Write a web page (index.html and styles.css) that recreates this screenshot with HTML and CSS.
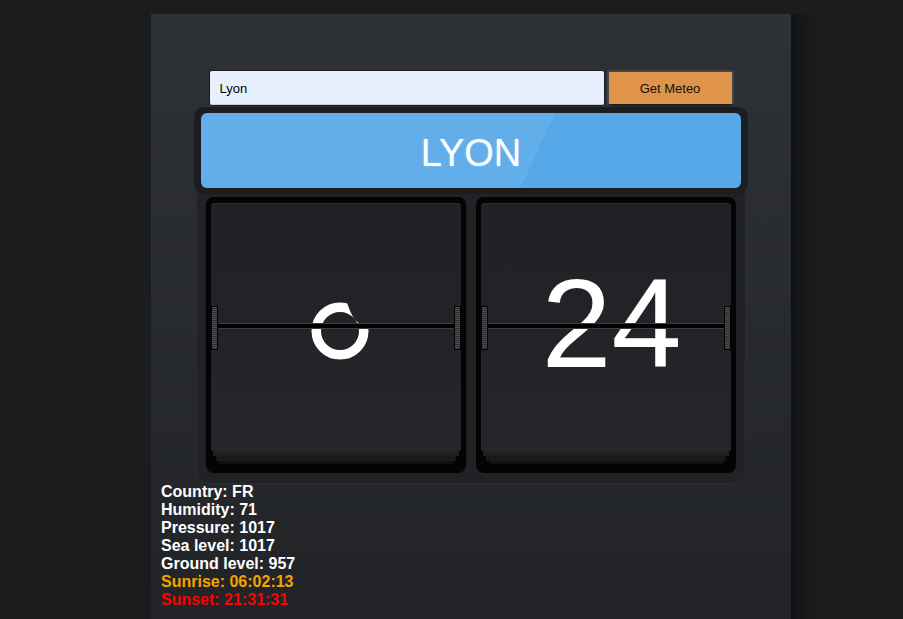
FILE: index.html
```html
<!DOCTYPE html>
<html lang="en">
<head>
<meta charset="utf-8">
<title>Meteo</title>
<link rel="stylesheet" href="styles.css">
</head>
<body>
<div class="panel">
  <form class="search">
    <input class="city-input" type="text" value="Lyon">
    <button class="btn" type="button">Get Meteo</button>
  </form>
  <div class="board">
    <div class="title">LYON</div>
  </div>
  <div class="cards">
    <div class="card">
      <div class="face">
        <svg class="icon" viewBox="0 0 60 60" width="60" height="60">
          <defs>
            <mask id="notch" maskUnits="userSpaceOnUse" x="0" y="0" width="60" height="60">
              <rect x="0" y="0" width="60" height="60" fill="#fff"/>
              <path fill="#000" d="M62,26 L58.4,26 C51,24.5 46,21 42.5,15 C40.5,11 38.5,6.5 36.5,0 L36.5,-3 L62,-3 Z"/>
            </mask>
          </defs>
          <circle cx="30" cy="30" r="23.75" fill="none" stroke="#fff" stroke-width="9.5" mask="url(#notch)"/>
        </svg>
        <span class="split"></span>
        <span class="hinge hinge-l"></span>
        <span class="hinge hinge-r"></span>
      </div>
      <div class="page p1"></div>
      <div class="page p2"></div>
      <div class="page p3"></div>
    </div>
    <div class="card">
      <div class="face">
        <span class="temp">24</span>
        <span class="split"></span>
        <span class="hinge hinge-l"></span>
        <span class="hinge hinge-r"></span>
      </div>
      <div class="page p1"></div>
      <div class="page p2"></div>
      <div class="page p3"></div>
    </div>
  </div>
  <div class="info">
    <div>Country: FR</div>
    <div>Humidity: 71</div>
    <div>Pressure: 1017</div>
    <div>Sea level: 1017</div>
    <div>Ground level: 957</div>
    <div class="sunrise">Sunrise: 06:02:13</div>
    <div class="sunset">Sunset: 21:31:31</div>
  </div>
</div>
</body>
</html>
```

FILE: styles.css
```css
html, body {
  height: 100%;
}
body {
  margin: 14px 0 0 151px;
  background: #1b1c1e;
  font-family: "Liberation Sans", Arial, sans-serif;
  overflow: hidden;
}
.panel {
  width: 640px;
  min-height: 640px;
  box-sizing: border-box;
  padding: 56px 0 0 0;
  background: linear-gradient(#2e3136, #222427 90%);
  box-shadow: 0 0 22px 6px rgba(0, 0, 0, 0.55);
}
.search {
  display: flex;
  gap: 2px;
  width: 525px;
  height: 36px;
  margin: 0 auto;
}
.city-input {
  flex: 0 0 396px;
  box-sizing: border-box;
  height: 36px;
  margin: 0;
  padding: 0 10px;
  border: 1px solid #1e1f22;
  border-radius: 3px;
  background: #e8f0fe;
  font-family: "Liberation Sans", Arial, sans-serif;
  font-size: 13px;
  color: #000;
  box-shadow: inset 0 -1px 0 #c9cfd8;
}
.btn {
  flex: 0 0 127px;
  box-sizing: border-box;
  height: 36px;
  margin: 0;
  border: 2px solid #45464a;
  border-bottom-color: #1d1e20;
  border-radius: 3px;
  background: #e0944a;
  font-family: "Liberation Sans", Arial, sans-serif;
  font-size: 13px;
  color: #111;
  padding: 0;
}
.board {
  position: relative;
  z-index: 1;
  width: 554px;
  box-sizing: border-box;
  margin: 1px auto 0;
  padding: 6px 7px;
  background: #1c1d20;
  border-radius: 10px;
}
.title {
  height: 75px;
  box-sizing: border-box;
  padding-top: 6px;
  display: flex;
  align-items: center;
  justify-content: center;
  border-radius: 6px;
  background: linear-gradient(115deg, #62aeea 61.6%, #57a8e8 61.6%);
  color: #fff;
  font-size: 38px;
  text-shadow: 0 0 2px rgba(255, 255, 255, 0.35);
}
.cards {
  width: 550px;
  box-sizing: border-box;
  margin: -8px auto 0;
  padding: 10px 9px;
  display: flex;
  gap: 10px;
  background: #202225;
  border: 1px solid #2c2e32;
  border-radius: 12px;
}
.card {
  width: 260px;
  box-sizing: border-box;
  padding: 6px 5px 9px;
  background: #040404;
  border-radius: 8px;
}
.face {
  position: relative;
  height: 249px;
  border-radius: 4px;
  background: linear-gradient(#202124, #24262a);
  box-shadow: inset 0 1px 0 #2b2c30;
  display: flex;
  align-items: center;
  justify-content: center;
}
.icon {
  display: block;
  padding: 7px 0 0 8px;
}
.temp {
  padding: 0 0 8px 11px;
  font-size: 126px;
  line-height: 1;
  color: #fff;
}
.split {
  position: absolute;
  left: 7px;
  right: 7px;
  top: 120px;
  height: 4px;
  background: #000;
  border-top: 1px solid #3a3c40;
  border-bottom: 1px solid #3a3c40;
}
.hinge {
  position: absolute;
  top: 103px;
  width: 5px;
  height: 42px;
  border: 1px solid #000;
  background: repeating-linear-gradient(#4a4b4e 0, #4a4b4e 1px, #2e2f32 1px, #2e2f32 2px);
}
.hinge-l {
  left: 0;
}
.hinge-r {
  right: 0;
}
.page {
  height: 4px;
}
.p1 {
  margin: 0 2px;
  background: #1e1f21;
}
.p2 {
  margin: 0 5px;
  background: #18191b;
  height: 5px;
}
.p3 {
  margin: 0 8px;
  background: #111213;
  height: 3px;
}
.info {
  padding-left: 10px;
  margin-top: -1px;
  font-size: 16px;
  font-weight: bold;
  line-height: 18px;
  color: #fff;
}
.sunrise {
  color: #f5a300;
}
.sunset {
  color: #ff0000;
}
```
